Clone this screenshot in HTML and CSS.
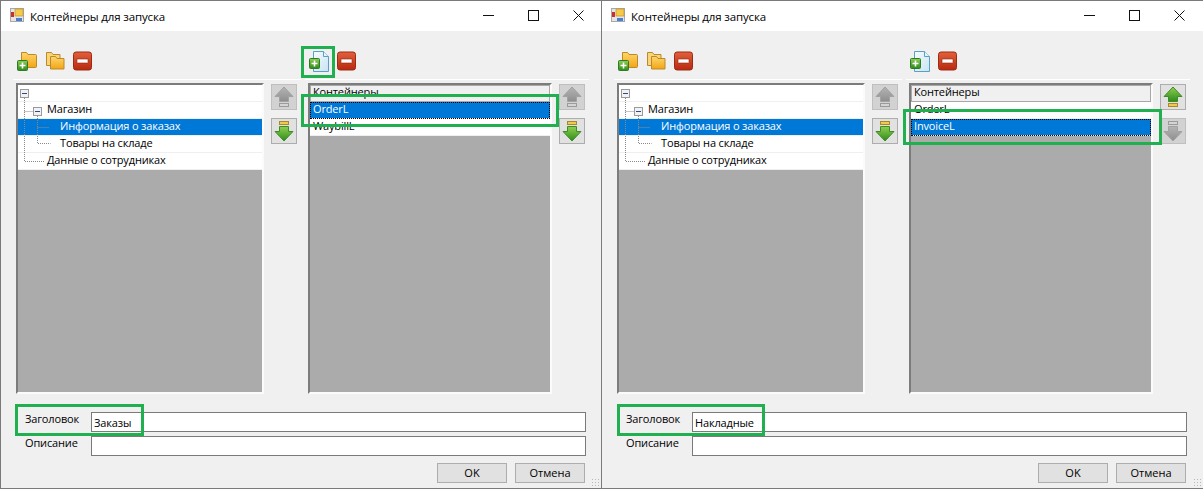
FILE: index.html
```html
<!DOCTYPE html>
<html lang="en">

<head>
    <meta charset="UTF-8">
    <title>Контейнеры для запуска</title>
    <link rel="stylesheet" href="styles.css">
</head>

<body>
    <svg class="defs" width="0" height="0">
        <defs>
            <linearGradient id="folderFill" x1="0" y1="0" x2="0" y2="1">
                <stop offset="0" stop-color="#ffd66b" />
                <stop offset="1" stop-color="#f2a516" />
            </linearGradient>
            <linearGradient id="redFill" x1="0" y1="0" x2="0" y2="1">
                <stop offset="0" stop-color="#e2603c" />
                <stop offset="1" stop-color="#b8290f" />
            </linearGradient>
            <linearGradient id="greenFill" x1="0" y1="0" x2="0" y2="1">
                <stop offset="0" stop-color="#8fd04f" />
                <stop offset="1" stop-color="#2e8a1c" />
            </linearGradient>
            <linearGradient id="greyFill" x1="0" y1="0" x2="0" y2="1">
                <stop offset="0" stop-color="#b4b4b4" />
                <stop offset="1" stop-color="#8e8e8e" />
            </linearGradient>
            <linearGradient id="pageFill" x1="0" y1="0" x2="1" y2="1">
                <stop offset="0" stop-color="#f6fbfe" />
                <stop offset="1" stop-color="#c8e4f2" />
            </linearGradient>
            <symbol id="plusBadge" viewBox="0 0 11 11">
                <rect x="0.500" y="0.500" width="10" height="10" rx="1" fill="url(#greenFill)" stroke="#2c7a2a" />
                <path d="M5.500 2.500v6M2.500 5.500h6" stroke="#fff" stroke-width="1.600" />
            </symbol>
            <symbol id="removeIcon" viewBox="0 0 20 20">
                <rect x="0.500" y="1" width="18" height="18" rx="2.500" fill="url(#redFill)" stroke="#9c2a14" />
                <rect x="4" y="8" width="11" height="4" rx="0.500" fill="#fff" stroke="#8e2410" stroke-width="0.600" />
            </symbol>
            <symbol id="addFolder" viewBox="0 0 20 20">
                <path d="M4.500 1.500h5l1.500 2h7.500a1 1 0 0 1 1 1v11a1 1 0 0 1-1 1h-14z" fill="url(#folderFill)" stroke="#b98a2c" />
                <use href="#plusBadge" x="0" y="9" width="11" height="11" />
            </symbol>
            <symbol id="folders" viewBox="0 0 20 20">
                <path d="M1.500 1.500h5l1.500 2h7v11h-13.500z" fill="#fbd477" stroke="#b98a2c" />
                <path d="M5.500 5.500h5l1.500 2h7v10.500h-13.500z" fill="url(#folderFill)" stroke="#b98a2c" />
            </symbol>
            <symbol id="addPage" viewBox="0 0 21 21">
                <path d="M4.500 0.500h10l5 5v15h-15z" fill="url(#pageFill)" stroke="#5a9fc4" />
                <path d="M14.500 0.500v5h5" fill="#e6f3fa" stroke="#5a9fc4" />
                <use href="#plusBadge" x="0" y="7" width="11" height="11" />
            </symbol>
            <symbol id="upGrey" viewBox="0 0 22 22">
                <path d="M11 1l9 9.500h-4.500v5h-9v-5h-4.500z" fill="url(#greyFill)" stroke="#a2a2a2" />
                <rect x="6.500" y="17.500" width="9" height="3" fill="#d4d4d4" stroke="#9a9a9a" />
            </symbol>
            <symbol id="upGreen" viewBox="0 0 22 22">
                <path d="M11 1l9 9.500h-4.500v5h-9v-5h-4.500z" fill="url(#greenFill)" stroke="#3d8c27" />
                <rect x="6.500" y="17.500" width="9" height="3" fill="#f1c94d" stroke="#a68a2a" />
            </symbol>
            <symbol id="downGreen" viewBox="0 0 22 22">
                <rect x="6.500" y="1.500" width="9" height="3" fill="#f1c94d" stroke="#a68a2a" />
                <path d="M6.500 6.500h9v5h4.500l-9 9.500l-9-9.500h4.500z" fill="url(#greenFill)" stroke="#3d8c27" />
            </symbol>
            <symbol id="downGrey" viewBox="0 0 22 22">
                <rect x="6.500" y="1.500" width="9" height="3" fill="#d4d4d4" stroke="#9a9a9a" />
                <path d="M6.500 6.500h9v5h4.500l-9 9.500l-9-9.500h4.500z" fill="url(#greyFill)" stroke="#a2a2a2" />
            </symbol>
            <symbol id="treeLines" viewBox="0 0 70 87">
                <g fill="none" stroke="#8a8a8a" stroke-dasharray="1 1">
                    <path d="M6.500 13v63.500h20M19.500 31v27.500h13M19.500 42.500h12M6.500 26.500h9" />
                </g>
                <g fill="#f2f2f2" stroke="#9a9a9a">
                    <rect x="2.500" y="4.500" width="8" height="8" />
                    <rect x="15.500" y="22.500" width="8" height="8" />
                </g>
                <path d="M4 8.500h5M17 26.500h5" stroke="#2b4d8c" />
            </symbol>
            <symbol id="appIcon" viewBox="0 0 14 14">
                <rect x="0.500" y="0.500" width="13" height="13" fill="#e4e4e4" stroke="#a8a8a8" />
                <rect x="5" y="1" width="8" height="7" fill="#f7c948" stroke="#b98a2c" stroke-width="0.600" />
                <rect x="1" y="4" width="3" height="5" fill="#c9302c" />
                <rect x="6" y="10" width="6" height="3" fill="#4a7fd0" />
            </symbol>
        </defs>
    </svg>

    <div class="desktop">
        <div class="window">
            <div class="titlebar">
                <svg class="app-icon"><use href="#appIcon" /></svg>
                <span class="title">Контейнеры для запуска</span>
                <div class="controls">
                    <svg class="ctl" viewBox="0 0 11 11"><path d="M0 5.500h11" stroke="#111" fill="none" /></svg>
                    <svg class="ctl" viewBox="0 0 11 11"><rect x="0.500" y="0.500" width="10" height="10" stroke="#111" fill="none" /></svg>
                    <svg class="ctl" viewBox="0 0 11 11"><path d="M0.500 0.500l10 10M10.500 0.500l-10 10" stroke="#111" fill="none" /></svg>
                </div>
            </div>
            <div class="panes">
                <div class="pane">
                    <div class="toolbar">
                        <svg class="tool"><use href="#addFolder" /></svg>
                        <svg class="tool"><use href="#folders" /></svg>
                        <svg class="tool"><use href="#removeIcon" /></svg>
                    </div>
                    <div class="pane-body">
                        <div class="grid-box tree-box">
                            <svg class="tree-lines"><use href="#treeLines" /></svg>
                            <div class="row"></div>
                            <div class="row lvl1">Магазин</div>
                            <div class="row lvl2 selected">Информация о заказах</div>
                            <div class="row lvl2">Товары на складе</div>
                            <div class="row lvl1">Данные о сотрудниках</div>
                        </div>
                        <div class="arrows">
                            <button class="arrow off"><svg><use href="#upGrey" /></svg></button>
                            <button class="arrow"><svg><use href="#downGreen" /></svg></button>
                        </div>
                    </div>
                </div>
                <div class="pane">
                    <div class="toolbar second">
                        <svg class="tool page"><use href="#addPage" /></svg>
                        <svg class="tool"><use href="#removeIcon" /></svg>
                    </div>
                    <div class="pane-body">
                        <div class="grid-box list-box">
                            <div class="row head">Контейнеры</div>
                            <div class="row selected focused">OrderL</div>
                            <div class="row">WaybillL</div>
                        </div>
                        <div class="arrows">
                            <button class="arrow off"><svg><use href="#upGrey" /></svg></button>
                            <button class="arrow"><svg><use href="#downGreen" /></svg></button>
                        </div>
                    </div>
                </div>
            </div>
            <div class="fields">
                <label class="field-label">Заголовок</label>
                <div class="input">Заказы</div>
                <label class="field-label">Описание</label>
                <div class="input"></div>
            </div>
            <div class="footer">
                <button class="btn">OK</button>
                <button class="btn">Отмена</button>
            </div>
            <div class="grip"></div>
            <div class="mark mark-tool"></div>
            <div class="mark mark-row"></div>
            <div class="mark mark-title"></div>
        </div>

        <div class="window">
            <div class="titlebar">
                <svg class="app-icon"><use href="#appIcon" /></svg>
                <span class="title">Контейнеры для запуска</span>
                <div class="controls">
                    <svg class="ctl" viewBox="0 0 11 11"><path d="M0 5.500h11" stroke="#111" fill="none" /></svg>
                    <svg class="ctl" viewBox="0 0 11 11"><rect x="0.500" y="0.500" width="10" height="10" stroke="#111" fill="none" /></svg>
                    <svg class="ctl" viewBox="0 0 11 11"><path d="M0.500 0.500l10 10M10.500 0.500l-10 10" stroke="#111" fill="none" /></svg>
                </div>
            </div>
            <div class="panes">
                <div class="pane">
                    <div class="toolbar">
                        <svg class="tool"><use href="#addFolder" /></svg>
                        <svg class="tool"><use href="#folders" /></svg>
                        <svg class="tool"><use href="#removeIcon" /></svg>
                    </div>
                    <div class="pane-body">
                        <div class="grid-box tree-box">
                            <svg class="tree-lines"><use href="#treeLines" /></svg>
                            <div class="row"></div>
                            <div class="row lvl1">Магазин</div>
                            <div class="row lvl2 selected">Информация о заказах</div>
                            <div class="row lvl2">Товары на складе</div>
                            <div class="row lvl1">Данные о сотрудниках</div>
                        </div>
                        <div class="arrows">
                            <button class="arrow off"><svg><use href="#upGrey" /></svg></button>
                            <button class="arrow"><svg><use href="#downGreen" /></svg></button>
                        </div>
                    </div>
                </div>
                <div class="pane">
                    <div class="toolbar second">
                        <svg class="tool page"><use href="#addPage" /></svg>
                        <svg class="tool"><use href="#removeIcon" /></svg>
                    </div>
                    <div class="pane-body">
                        <div class="grid-box list-box">
                            <div class="row head">Контейнеры</div>
                            <div class="row">OrderL</div>
                            <div class="row selected focused">InvoiceL</div>
                        </div>
                        <div class="arrows">
                            <button class="arrow"><svg><use href="#upGreen" /></svg></button>
                            <button class="arrow off"><svg><use href="#downGrey" /></svg></button>
                        </div>
                    </div>
                </div>
            </div>
            <div class="fields">
                <label class="field-label">Заголовок</label>
                <div class="input">Накладные</div>
                <label class="field-label">Описание</label>
                <div class="input"></div>
            </div>
            <div class="footer">
                <button class="btn">OK</button>
                <button class="btn">Отмена</button>
            </div>
            <div class="grip"></div>
            <div class="mark mark-row second-row"></div>
            <div class="mark mark-title wide"></div>
        </div>
    </div>
</body>

</html>
```

FILE: styles.css
```css
* {
    box-sizing: border-box;
}

html,
body {
    margin: 0;
    padding: 0;
    height: 489px;
    overflow: hidden;
}

body {
    font-family: "Open Sans", "Noto Sans", sans-serif;
    font-size: 11px;
    letter-spacing: -0.15px;
    color: #000;
    background: #f0f0f0;
}

.defs {
    position: absolute;
}

.desktop {
    display: grid;
    grid-template-columns: 601px 602px;
    height: 489px;
}

.window {
    position: relative;
    display: flex;
    flex-direction: column;
    height: 489px;
    background: #f0f0f0;
    border-top: 1px solid #7a7a7a;
    border-left: 1px solid #7a7a7a;
    border-bottom: 1px solid #7a7a7a;
}

/* title bar */
.titlebar {
    display: flex;
    align-items: center;
    height: 30px;
    background: #fff;
    padding: 0 0 2px 9px;
}

.app-icon {
    width: 14px;
    height: 14px;
}

.title {
    margin: 2px 0 0 6px;
    font-size: 11.5px;
}

.controls {
    display: flex;
    gap: 34px;
    margin-left: auto;
    padding-right: 17px;
}

.window:last-child .controls {
    padding-right: 18px;
}

.ctl {
    width: 11px;
    height: 11px;
}

/* panes */
.panes {
    display: grid;
    grid-template-columns: 288px 284px;
    column-gap: 4px;
    margin-left: 12px;
}

.toolbar {
    display: flex;
    align-items: center;
    gap: 8px;
    height: 49px;
    padding: 12px 0 0 4px;
    border-bottom: 1px solid #fff;
}

.toolbar.second {
    padding-left: 4px;
    gap: 7px;
}

.tool {
    width: 20px;
    height: 20px;
}

.tool.page {
    width: 21px;
    height: 21px;
}

.pane-body {
    display: flex;
    margin-top: 3px;
    padding-left: 3px;
}

.grid-box {
    height: 311px;
    background: #ababab;
    border-top: 2px solid #7c7c7c;
    border-left: 2px solid #7c7c7c;
    border-right: 2px solid #fbfbfb;
    border-bottom: 2px solid #fbfbfb;
    position: relative;
}

.tree-box {
    width: 248px;
}

.list-box {
    width: 244px;
}

.tree-lines {
    position: absolute;
    left: 0;
    top: 0;
    width: 70px;
    height: 87px;
    z-index: 1;
}

.row {
    height: 17px;
    line-height: 14px;
    background: #fff;
    border-bottom: 1px solid #efefef;
    padding-left: 3px;
    white-space: nowrap;
}

.row.lvl1 {
    padding-left: 29px;
}

.row.lvl2 {
    padding-left: 42px;
}

.row.head {
    background: #f0f0f0;
    border: 1px solid #a8a8a8;
    padding-left: 2px;
    line-height: 12px;
}

.row.selected {
    background: #0078d7;
    color: #fff;
}

.row.focused {
    outline: 1px dotted #000;
    outline-offset: -1px;
}

.arrows {
    display: flex;
    flex-direction: column;
    gap: 8px;
    margin: 1px 0 0 7px;
}

.arrow {
    display: flex;
    align-items: center;
    justify-content: center;
    width: 26px;
    height: 26px;
    padding: 0;
    background: #e1e1e1;
    border: 1px solid #adadad;
}

.arrow.off {
    background: #d2d2d2;
    border-color: #bfbfbf;
}

.arrow svg {
    width: 22px;
    height: 22px;
}

/* caption + description */
.fields {
    display: grid;
    grid-template-columns: 66px 495px;
    row-gap: 4px;
    margin: 18px 0 0 24px;
}

.field-label {
    line-height: 14px;
}

.input {
    height: 20px;
    background: #fff;
    border: 1px solid #7a7a7a;
    padding-left: 2px;
    line-height: 19px;
}

.footer {
    display: flex;
    justify-content: flex-end;
    gap: 8px;
    width: 584px;
    margin-top: 7px;
}

.btn {
    width: 70px;
    height: 20px;
    padding: 0 0 2px;
    font: inherit;
    font-size: 11px;
    letter-spacing: 0;
    background: #e1e1e1;
    border: 1px solid #adadad;
}

.grip {
    position: absolute;
    right: 0;
    bottom: 0;
    width: 10px;
    height: 10px;
    background-image: radial-gradient(#b8b8b8 1px, transparent 1px);
    background-size: 3px 3px;
}

/* green highlight frames drawn over the shots */
.mark {
    position: absolute;
    border: 3px solid #21b04f;
    z-index: 2;
}

.mark-tool {
    left: 300px;
    top: 45px;
    width: 34px;
    height: 32px;
}

.mark-row {
    left: 300px;
    top: 93px;
    width: 258px;
    height: 33px;
}

.mark-row.second-row {
    left: 301px;
    top: 108px;
    width: 259px;
    height: 36px;
}

.mark-title {
    left: 14px;
    top: 403px;
    width: 129px;
    height: 32px;
}

.mark-title.wide {
    left: 15px;
    width: 148px;
}
```
